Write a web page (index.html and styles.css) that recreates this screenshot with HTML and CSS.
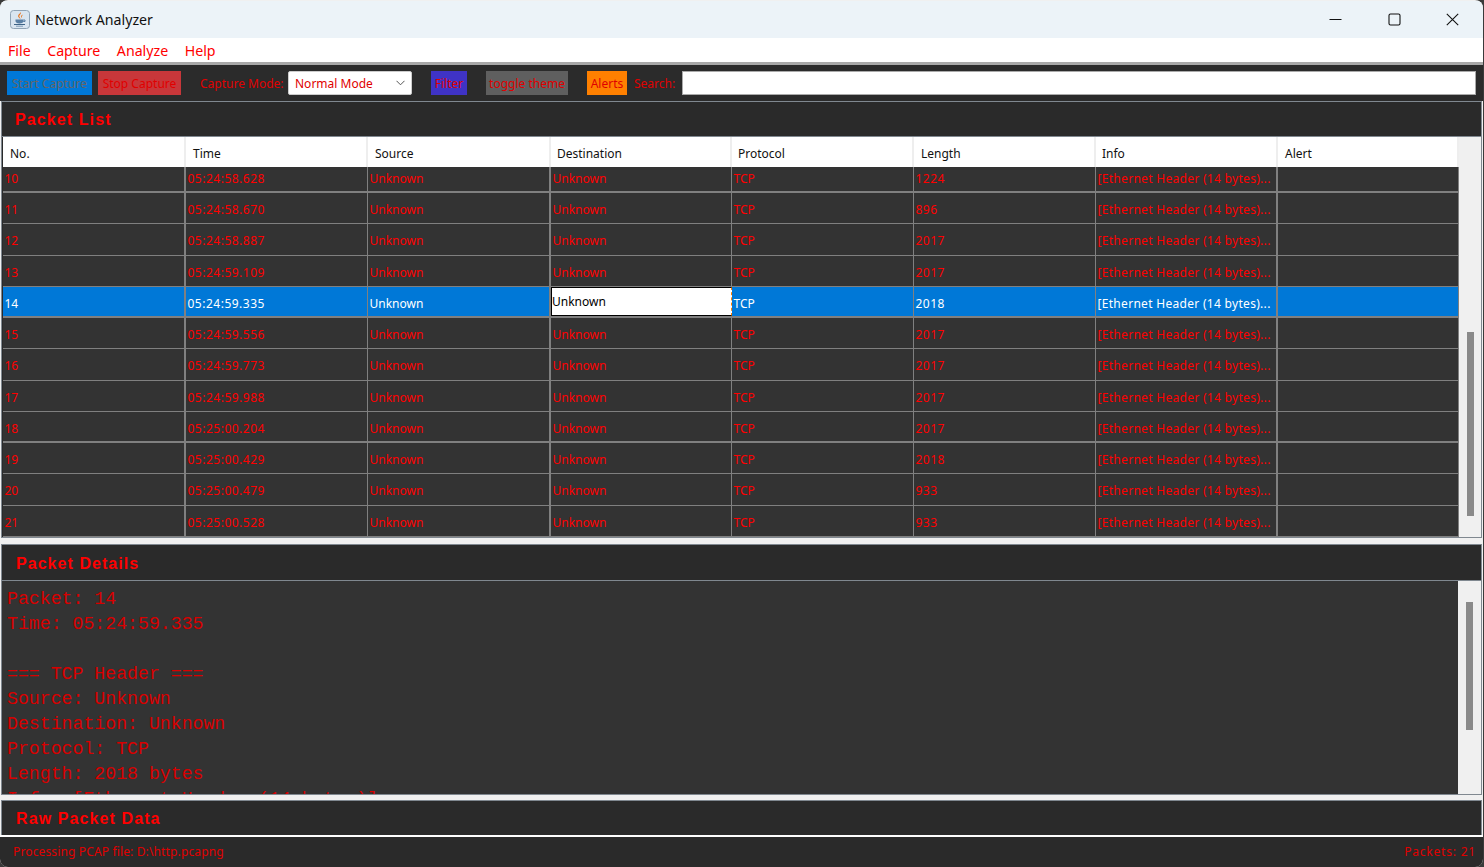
FILE: index.html
```html
<!DOCTYPE html>
<html>
<head>
    <title>Network Analyzer</title>
    <link rel="stylesheet" href="styles.css">
</head>
<body>
    <div class="window">
        <div class="titlebar">
            <svg class="app-icon" width="20" height="19" viewBox="0 0 20 19">
                <rect x="0.5" y="0.5" width="19" height="18" rx="3" fill="#d9e5f0" stroke="#8fa3b5"/>
                <path d="M10.500 2c1.500 2-2 3-1 5 .3.700 1 1.300 1 2-1.800-1-3.200-2.500-2-4.200 .7-1 2-1.500 2-2.800z" fill="#e8731a"/>
                <path d="M12.500 4.500c.5 1.200-1.500 2-.8 3.500-1-.6-1.200-2 .8-3.500z" fill="#e8731a"/>
                <path d="M5.500 9.500h8v1.500c0 1.500-1.500 2.500-4 2.500s-4-1-4-2.500z" fill="#5a7fa3"/>
                <path d="M13.500 10h1.500v1.500h-1.700" fill="none" stroke="#5a7fa3"/>
                <path d="M4 14.500h11" stroke="#3f6487" stroke-width="1.200"/>
                <path d="M6 16.200h7" stroke="#7d9ab5"/>
            </svg>
            <span class="app-title">Network Analyzer</span>
            <div class="win-controls">
                <svg width="13" height="13" viewBox="0 0 13 13"><path d="M0.500 6.500h12" stroke="#111" stroke-width="1.100"/></svg>
                <svg width="13" height="13" viewBox="0 0 13 13"><rect x="1" y="1" width="11" height="11" rx="1.500" fill="none" stroke="#111" stroke-width="1.100"/></svg>
                <svg width="13" height="13" viewBox="0 0 13 13"><path d="M0.800 0.800l11.400 11.400M12.200 0.800l-11.400 11.400" stroke="#111" stroke-width="1.100"/></svg>
            </div>
        </div>

        <div class="menubar">
            <span>File</span>
            <span>Capture</span>
            <span>Analyze</span>
            <span>Help</span>
        </div>

        <div class="toolbar">
            <button class="btn btn-start">Start Capture</button>
            <button class="btn btn-stop">Stop Capture</button>
            <label class="mode-label">Capture Mode:</label>
            <div class="combo">
                <span>Normal Mode</span>
                <svg width="9" height="6" viewBox="0 0 9 6"><path d="M0.500 0.800l4 4 4-4" fill="none" stroke="#555"/></svg>
            </div>
            <button class="btn btn-filter">Filter</button>
            <button class="btn btn-theme">toggle theme</button>
            <button class="btn btn-alerts">Alerts</button>
            <label class="search-label">Search:</label>
            <input class="search" type="text">
        </div>

        <div class="panel panel-list">
            <h2 class="panel-title">Packet List</h2>
            <div class="table-wrap">
                <div class="table">
                    <div class="thead">
                        <div>No.</div><div>Time</div><div>Source</div><div>Destination</div><div>Protocol</div><div>Length</div><div>Info</div><div>Alert</div>
                    </div>
                    <div class="tbody">
                        <div class="row"><div>10</div><div>05:24:58.628</div><div>Unknown</div><div>Unknown</div><div>TCP</div><div>1224</div><div>[Ethernet Header (14 bytes)...</div><div></div></div>
                        <div class="row"><div>11</div><div>05:24:58.670</div><div>Unknown</div><div>Unknown</div><div>TCP</div><div>896</div><div>[Ethernet Header (14 bytes)...</div><div></div></div>
                        <div class="row"><div>12</div><div>05:24:58.887</div><div>Unknown</div><div>Unknown</div><div>TCP</div><div>2017</div><div>[Ethernet Header (14 bytes)...</div><div></div></div>
                        <div class="row"><div>13</div><div>05:24:59.109</div><div>Unknown</div><div>Unknown</div><div>TCP</div><div>2017</div><div>[Ethernet Header (14 bytes)...</div><div></div></div>
                        <div class="row selected"><div>14</div><div>05:24:59.335</div><div>Unknown</div><div class="editing">Unknown</div><div>TCP</div><div>2018</div><div>[Ethernet Header (14 bytes)...</div><div></div></div>
                        <div class="row"><div>15</div><div>05:24:59.556</div><div>Unknown</div><div>Unknown</div><div>TCP</div><div>2017</div><div>[Ethernet Header (14 bytes)...</div><div></div></div>
                        <div class="row"><div>16</div><div>05:24:59.773</div><div>Unknown</div><div>Unknown</div><div>TCP</div><div>2017</div><div>[Ethernet Header (14 bytes)...</div><div></div></div>
                        <div class="row"><div>17</div><div>05:24:59.988</div><div>Unknown</div><div>Unknown</div><div>TCP</div><div>2017</div><div>[Ethernet Header (14 bytes)...</div><div></div></div>
                        <div class="row"><div>18</div><div>05:25:00.204</div><div>Unknown</div><div>Unknown</div><div>TCP</div><div>2017</div><div>[Ethernet Header (14 bytes)...</div><div></div></div>
                        <div class="row"><div>19</div><div>05:25:00.429</div><div>Unknown</div><div>Unknown</div><div>TCP</div><div>2018</div><div>[Ethernet Header (14 bytes)...</div><div></div></div>
                        <div class="row"><div>20</div><div>05:25:00.479</div><div>Unknown</div><div>Unknown</div><div>TCP</div><div>933</div><div>[Ethernet Header (14 bytes)...</div><div></div></div>
                        <div class="row"><div>21</div><div>05:25:00.528</div><div>Unknown</div><div>Unknown</div><div>TCP</div><div>933</div><div>[Ethernet Header (14 bytes)...</div><div></div></div>
                    </div>
                </div>
                <div class="scrollbar list-scroll"><div class="thumb"></div></div>
            </div>
        </div>

        <div class="divider"></div>

        <div class="panel panel-details">
            <h2 class="panel-title">Packet Details</h2>
            <div class="details-wrap">
                <pre class="details">Packet: 14
Time: 05:24:59.335

=== TCP Header ===
Source: Unknown
Destination: Unknown
Protocol: TCP
Length: 2018 bytes
Info: [Ethernet Header (14 bytes)]</pre>
                <div class="scrollbar details-scroll"><div class="thumb"></div></div>
            </div>
        </div>

        <div class="divider-thin"></div>

        <div class="panel panel-raw">
            <h2 class="panel-title">Raw Packet Data</h2>
        </div>

        <div class="statusbar">
            <span class="status-msg">Processing PCAP file: D:\http.pcapng</span>
            <span class="status-count">Packets: 21</span>
        </div>
    </div>
</body>
</html>
```

FILE: styles.css
```css
* {
    box-sizing: border-box;
}
body {
    margin: 0;
    height: 867px;
    overflow: hidden;
    background-color: #3a3a3a;
    font-family: "Noto Sans", Arial, sans-serif;
}
.window {
    height: 867px;
    margin-right: 1px;
    padding-top: 1px;
    display: flex;
    flex-direction: column;
    background-color: #f0f0f0;
    border-radius: 8px;
    overflow: hidden;
}

/* title bar */
.titlebar {
    height: 37px;
    flex: none;
    display: flex;
    align-items: center;
    padding: 0 0 1px 10px;
    background-color: #ecf3f8;
}
.app-title {
    margin-left: 5px;
    font-size: 14.2px;
    color: #111;
}
.win-controls {
    margin-left: auto;
    width: 154px;
    padding: 0 24px 0 0;
    display: flex;
    justify-content: space-between;
}

/* menu */
.menubar {
    height: 27px;
    flex: none;
    display: flex;
    gap: 16.5px;
    padding-left: 8px;
    font-size: 14.2px;
    line-height: 26px;
    color: #f00;
    background-color: white;
    border-bottom: 3px solid #a8a8a8;
}

/* toolbar */
.toolbar {
    height: 36px;
    flex: none;
    display: flex;
    align-items: center;
    padding: 0 7px;
    font-size: 12px;
    color: #e00000;
    background-color: #2b2b2b;
}
.btn {
    height: 24px;
    padding: 0;
    border: none;
    font-family: inherit;
    font-size: 12px;
    color: #e00000;
}
.btn-start { width: 85px; margin-right: 6px; background-color: #0078d7; color: #666; }
.btn-stop { width: 83px; margin-right: 19px; background-color: #c8373a; }
.mode-label { width: 85px; margin-right: 3px; white-space: nowrap; }
.combo {
    width: 124px;
    height: 24px;
    margin-right: 19px;
    padding: 0 6px;
    display: flex;
    align-items: center;
    justify-content: space-between;
    background-color: white;
    border: 1px solid #ccc;
    border-radius: 2px;
}
.btn-filter { width: 36px; margin-right: 19px; background-color: #3f33c5; }
.btn-theme { width: 82px; margin-right: 19px; background-color: #5f5f5f; }
.btn-alerts { width: 40px; margin-right: 7px; background-color: #ff8000; }
.search-label { width: 44px; margin-right: 4px; }
.search {
    width: 794px;
    height: 24px;
    border: 1px solid #aaa;
    background-color: white;
}

/* panels */
.panel {
    flex: none;
    margin: 0 1px;
    display: flex;
    flex-direction: column;
    background-color: #2a2a2a;
    border: 1px solid #808890;
}
.panel-title {
    height: 34px;
    flex: none;
    margin: 0;
    padding-left: 14px;
    font-family: "Liberation Sans", Arial, sans-serif;
    font-size: 16px;
    line-height: 36px;
    font-weight: bold;
    letter-spacing: 1.1px;
    color: #f00;
}
.panel-list { height: 437px; }
.panel-list .panel-title { padding-left: 13px; }
.panel-details { height: 251px; }
.panel-details .panel-title { height: 35px; line-height: 37px; letter-spacing: 1.05px; }
.panel-raw { height: 35px; border-bottom: none; }
.divider { height: 6px; flex: none; background-color: #f0f0f0; }
.divider-thin { height: 5px; flex: none; background-color: #f0f0f0; }

/* packet table */
.table-wrap {
    flex: 1;
    min-height: 0;
    display: flex;
    padding-left: 1px;
    background-color: #2a2a2a;
    border-top: 1px solid #808890;
}
.table {
    width: 1456px;
    flex: none;
    display: flex;
    flex-direction: column;
    overflow: hidden;
}
.thead, .row {
    display: grid;
    grid-template-columns: 183px 182px 183px 181px 182px 182px 182px 181px;
    flex: none;
}
.thead {
    height: 30px;
    background-color: white;
    font-size: 12px;
    line-height: 33px;
    color: #111;
}
.thead div {
    padding-left: 7px;
    border-right: 2px solid #eee;
}
.thead div:nth-child(4), .thead div:nth-child(5), .thead div:nth-child(7) {
    padding-left: 6px;
}
.tbody {
    flex: 1;
    min-height: 0;
    overflow: hidden;
}
.row {
    height: 31.25px;
    background-color: #333;
    font-size: 12px;
    line-height: 33px;
    color: #f00;
    border-bottom: 1px solid #808080;
}
.row:first-child {
    margin-top: -5.25px;
}
.row:nth-child(4n+1) {
    border-bottom-width: 2px;
}
.row div {
    padding-left: 1.5px;
    border-right: 1px solid #808080;
    white-space: nowrap;
    overflow: hidden;
}
.row div:nth-child(1), .row div:nth-child(3), .row div:nth-child(7) {
    border-right-width: 2px;
}
.row div:nth-child(2), .row div:nth-child(6) {
    letter-spacing: 0.5px;
}
.row div:nth-child(7) {
    letter-spacing: 0.3px;
}
.row.selected {
    background-color: #0078d7;
    color: white;
}
.row .editing {
    padding-left: 0;
    line-height: 28px;
    background-color: white;
    color: black;
    border: 1px solid black;
    border-right: 1px dashed #ff8000;
}
.scrollbar {
    flex: 1;
    position: relative;
    background-color: #f0f0f0;
}
.thumb {
    position: absolute;
    width: 7px;
    background-color: #8a8a8a;
}
.list-scroll .thumb {
    top: 195px;
    left: 8px;
    height: 184px;
}
.details-scroll .thumb {
    top: 21px;
    left: 8px;
    height: 128px;
}

/* details */
.details-wrap {
    flex: 1;
    min-height: 0;
    display: flex;
    padding-left: 1px;
    border-top: 1px solid #808890;
    background-color: #333;
}
.details {
    width: 1455px;
    flex: none;
    margin: 0;
    padding: 6px 0 0 4px;
    overflow: hidden;
    font-family: "Liberation Mono", "Courier New", monospace;
    font-size: 18.2px;
    line-height: 25px;
    color: #d80000;
}

/* status */
.statusbar {
    flex: 1;
    display: flex;
    justify-content: space-between;
    align-items: center;
    padding: 0 7px 2px 13px;
    font-size: 12px;
    color: #e00000;
    background-color: #2a2a2a;
    border-top: 2px solid white;
}
.status-msg { letter-spacing: 0.14px; }
.status-count { letter-spacing: 0.8px; }
```
